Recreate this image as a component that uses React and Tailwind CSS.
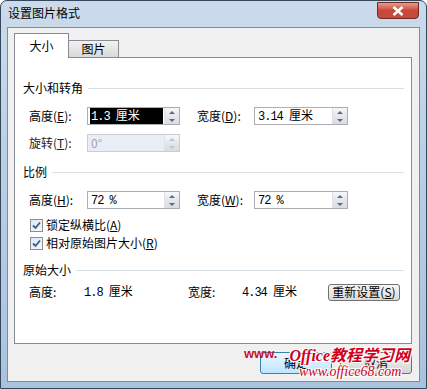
import React from "react";

const cjk = { fontFamily: '"Noto Sans CJK SC", "Liberation Sans", sans-serif' };

const Heading = ({ children }) => (
  <div className="flex items-center h-[16px] pl-[8px] pr-[7px]">
    <span className="leading-none">{children}</span>
    <div className="flex-1 h-px bg-[#d5dfe5] ml-[5px]" />
  </div>
);

const Spin = ({ value, width = 93, selected, disabled }) => (
  <div
    className={`flex h-[18px] border ${disabled ? "border-[#c7ced8] bg-[#e9eef6]" : "border-[#abadb3] bg-white"}`}
    style={{ width }}
  >
    <div className="flex-1 flex items-center pl-[2px] pr-[1px]">
      <span
        className={`leading-[14px] pl-[1px] ${selected ? "bg-black text-white flex-1" : ""} ${disabled ? "text-[#a3a3a3]" : ""}`}
      >
        {value}
      </span>
    </div>
    <div className={`w-[15px] flex flex-col border-l ${disabled ? "border-[#dde2ea]" : "border-[#dfe3e8]"}`}>
      <div className="flex-1 flex items-center justify-center bg-gradient-to-b from-[#f6f7f9] to-[#e4e7ec]">
        <div className={`w-0 h-0 border-l-[3px] border-r-[3px] border-b-[3px] border-l-transparent border-r-transparent ${disabled ? "border-b-[#c0c5cc]" : "border-b-[#5d6b7c]"}`} />
      </div>
      <div className="flex-1 flex items-center justify-center bg-gradient-to-b from-[#e4e7ec] to-[#d8dce2]">
        <div className={`w-0 h-0 border-l-[3px] border-r-[3px] border-t-[3px] border-l-transparent border-r-transparent ${disabled ? "border-t-[#c0c5cc]" : "border-t-[#5d6b7c]"}`} />
      </div>
    </div>
  </div>
);

const Check = ({ children }) => (
  <div className="flex items-center h-[16px] pl-[15px]">
    <div className="w-[13px] h-[13px] border border-[#8e8f8f] bg-gradient-to-br from-[#dbe9f5] to-[#f4f8fb] flex items-center justify-center">
      <svg width="9" height="9" viewBox="0 0 9 9">
        <path d="M1 4.5 L3.5 7 L8 1.5" fill="none" stroke="#3b5b8c" strokeWidth="1.8" />
      </svg>
    </div>
    <span className="ml-[3px] leading-none">{children}</span>
  </div>
);

const Mono = ({ children }) => (
  <span style={{ fontFamily: '"Liberation Mono", monospace', letterSpacing: "-1px" }}>{children}</span>
);

const halo = "1px 1px 0 #fff, -1px -1px 0 #fff, 1px -1px 0 #fff, -1px 1px 0 #fff";

export default function App() {
  return (
    <div
      className="relative w-[427px] h-[389px] flex flex-col rounded-t-[7px] border border-[#34475d] bg-gradient-to-b from-[#cbdbeb] via-[#b8cde3] to-[#aac3dd] px-[6px] pb-[6px] text-[12px] text-black"
      style={cjk}
    >
      {/* title bar */}
      <div className="h-[26px] flex items-start justify-between">
        <span className="mt-[6px] ml-[1px] leading-none">设置图片格式</span>
        <div className="mt-[1px] mr-[1px] w-[42px] h-[17px] rounded-b-[4px] border border-[#6b2a22] bg-gradient-to-b from-[#e79c8a] via-[#c9473a] to-[#c24c3a] flex items-center justify-center">
          <svg width="12" height="10" viewBox="0 0 12 10">
            <path d="M1.5 1 L10.5 9 M10.5 1 L1.5 9" stroke="#ffffff" strokeWidth="2.6" />
          </svg>
        </div>
      </div>

      {/* client */}
      <div className="flex-1 flex flex-col bg-[#f0f0f0] border border-[#7d8da1] pl-[6px] pr-[7px]">
        {/* tabs */}
        <div className="flex items-end h-[29px] pt-[5px]">
          <div className="w-[55px] h-[25px] bg-white border border-[#898c95] border-b-0 flex items-center justify-center relative z-10 -mb-px">
            <span className="leading-none">大小</span>
          </div>
          <div className="w-[50px] h-[17px] bg-gradient-to-b from-[#f2f2f2] to-[#d9d9d9] border border-[#898c95] border-l-0 border-b-0 flex items-center justify-center">
            <span className="leading-none">图片</span>
          </div>
        </div>

        {/* panel */}
        <div className="h-[287px] bg-white border border-[#898c95] pt-[22px]">
          <Heading>大小和转角</Heading>
          <div className="flex items-center h-[20px] mt-[10px] pl-[14px]">
            <span className="w-[58px]">高度(<u>E</u>):</span>
            <Spin value={<><Mono>1.3 </Mono>厘米</>} selected />
            <span className="w-[57px] ml-[17px]">宽度(<u>D</u>):</span>
            <Spin value={<><Mono>3.14 </Mono>厘米</>} width={94} />
          </div>
          <div className="flex items-center h-[20px] mt-[7px] pl-[14px]">
            <span className="w-[58px] text-[#222]">旋转(<u>T</u>):</span>
            <Spin value="0°" disabled />
          </div>

          <div className="mt-[11px]">
            <Heading>比例</Heading>
          </div>
          <div className="flex items-center h-[20px] mt-[10px] pl-[14px]">
            <span className="w-[58px]">高度(<u>H</u>):</span>
            <Spin value={<Mono>72 %</Mono>} />
            <span className="w-[57px] ml-[17px]">宽度(<u>W</u>):</span>
            <Spin value={<Mono>72 %</Mono>} width={94} />
          </div>
          <div className="mt-[7px]">
            <Check>锁定纵横比(<u>A</u>)</Check>
          </div>
          <div className="mt-[2px]">
            <Check>相对原始图片大小(<u>R</u>)</Check>
          </div>

          <div className="mt-[11px]">
            <Heading>原始大小</Heading>
          </div>
          <div className="flex items-center h-[20px] mt-[4px] pl-[14px]">
            <span className="w-[55px]">高度:</span>
            <span className="w-[104px]"><Mono>1.8 </Mono>厘米</span>
            <span className="w-[54px]">宽度:</span>
            <span className="w-[86px]"><Mono>4.34 </Mono>厘米</span>
            <button className="w-[72px] h-[17px] border border-[#707070] rounded-[3px] bg-gradient-to-b from-[#f6f6f6] to-[#dadada] flex items-center justify-center leading-none">
              重新设置(<u>S</u>)
            </button>
          </div>
        </div>

        {/* footer buttons */}
        <div className="flex justify-end gap-[8px] pt-[8px]">
          <button className="w-[72px] h-[22px] border border-[#3c7fb1] rounded-[3px] bg-gradient-to-b from-[#eaf6fd] to-[#bee6fd] leading-none">确定</button>
          <button className="w-[72px] h-[22px] border border-[#707070] rounded-[3px] bg-gradient-to-b from-[#f2f2f2] to-[#d5d5d5] leading-none">取消</button>
        </div>
      </div>

      {/* watermark */}
      <div className="absolute left-[243px] top-[342px] w-[176px] pointer-events-none whitespace-nowrap">
        <div className="flex items-end h-[21px]">
          <span
            className="text-[#c8102e] font-bold text-[13px] leading-none mb-[4px]"
            style={{ fontFamily: '"Liberation Sans", sans-serif' }}
          >
            www.
          </span>
          <span
            className="ml-[12px] text-[#d0021b] italic font-bold text-[16px] leading-none"
            style={{ fontFamily: '"Liberation Serif", "Noto Sans CJK SC", serif', textShadow: halo }}
          >
            Office教程学习网
          </span>
        </div>
        <div
          className="ml-[55px] mt-[1px] text-[#d0021b] italic text-[14px] leading-none"
          style={{ fontFamily: '"Liberation Serif", serif', textShadow: halo }}
        >
          www.office68.com
        </div>
      </div>
    </div>
  );
}
